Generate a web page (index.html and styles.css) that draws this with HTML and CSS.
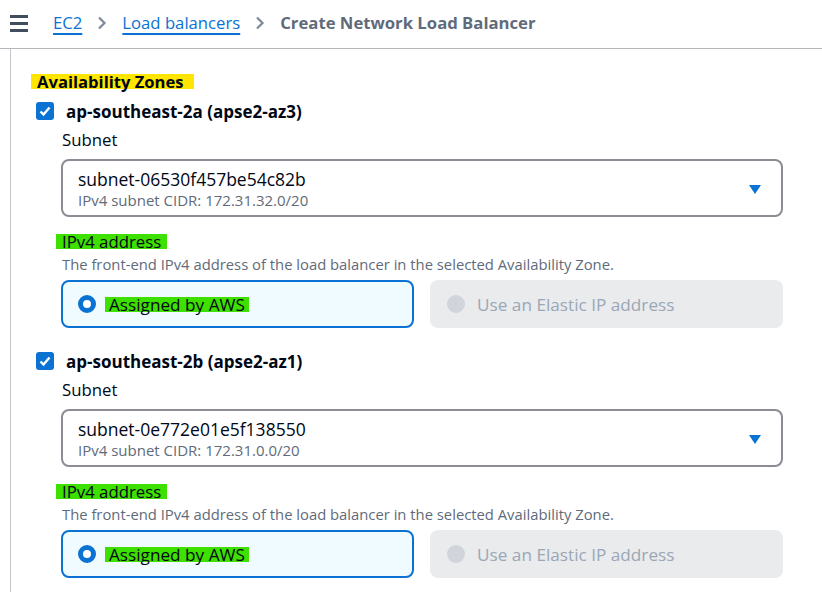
FILE: index.html
```html
<!DOCTYPE html>
<html lang="en">
<head>
    <meta charset="UTF-8">
    <meta name="viewport" content="width=device-width, initial-scale=1.0">
    <title>Create Network Load Balancer</title>
    <link rel="stylesheet" href="styles.css">
</head>
<body>
    <header class="top-bar">
        <span class="menu-btn">
            <svg width="18" height="18" viewBox="0 0 18 18"><rect x="0" y="1" width="18" height="3"/><rect x="0" y="8" width="18" height="3"/><rect x="0" y="15" width="18" height="3"/></svg>
        </span>
        <nav class="breadcrumbs">
            <a href="#">EC2</a>
            <span class="crumb-sep"><svg width="12" height="14" viewBox="0 0 12 14"><path d="M3 1.5l5.5 5.5-5.5 5.5"/></svg></span>
            <a href="#">Load balancers</a>
            <span class="crumb-sep"><svg width="12" height="14" viewBox="0 0 12 14"><path d="M3 1.5l5.5 5.5-5.5 5.5"/></svg></span>
            <span class="crumb-current">Create Network Load Balancer</span>
        </nav>
    </header>

    <main class="content">
        <h2 class="section-title"><span class="hl-yellow">Availability Zones</span></h2>

        <div class="az">
            <label class="az-check">
                <span class="checkbox"><svg width="14" height="14" viewBox="0 0 14 14"><path d="M2.5 7.5l3 3 6-7"/></svg></span>
                <span class="az-name">ap-southeast-2a (apse2-az3)</span>
            </label>
            <div class="az-body">
                <div class="field-label">Subnet</div>
                <div class="select">
                    <div class="select-text">
                        <div class="select-value">subnet-06530f457be54c82b</div>
                        <div class="select-desc">IPv4 subnet CIDR: 172.31.32.0/20</div>
                    </div>
                    <span class="caret"></span>
                </div>
                <div class="field-label field-label-hl"><span class="hl-green">IPv4 address</span></div>
                <div class="field-desc">The front-end IPv4 address of the load balancer in the selected Availability Zone.</div>
                <div class="tiles">
                    <div class="tile tile-selected"><span class="radio radio-on"></span><span class="hl-green hl-tile">Assigned by AWS</span></div>
                    <div class="tile tile-disabled"><span class="radio radio-off"></span><span>Use an Elastic IP address</span></div>
                </div>
            </div>
        </div>

        <div class="az">
            <label class="az-check">
                <span class="checkbox"><svg width="14" height="14" viewBox="0 0 14 14"><path d="M2.5 7.5l3 3 6-7"/></svg></span>
                <span class="az-name">ap-southeast-2b (apse2-az1)</span>
            </label>
            <div class="az-body">
                <div class="field-label">Subnet</div>
                <div class="select">
                    <div class="select-text">
                        <div class="select-value">subnet-0e772e01e5f138550</div>
                        <div class="select-desc">IPv4 subnet CIDR: 172.31.0.0/20</div>
                    </div>
                    <span class="caret"></span>
                </div>
                <div class="field-label field-label-hl"><span class="hl-green">IPv4 address</span></div>
                <div class="field-desc">The front-end IPv4 address of the load balancer in the selected Availability Zone.</div>
                <div class="tiles">
                    <div class="tile tile-selected"><span class="radio radio-on"></span><span class="hl-green hl-tile">Assigned by AWS</span></div>
                    <div class="tile tile-disabled"><span class="radio radio-off"></span><span>Use an Elastic IP address</span></div>
                </div>
            </div>
        </div>
    </main>
</body>
</html>
```

FILE: styles.css
```css
html {
    height: 100%;
}

body {
    font-family: 'Open Sans', 'Liberation Sans', sans-serif;
    margin: 0;
    padding: 0;
    background-color: #fff;
    color: #000716;
    min-height: 100%;
    display: flex;
    flex-direction: column;
}

.top-bar {
    height: 48px;
    flex-shrink: 0;
    border-bottom: 1px solid #b4b4bb;
    display: flex;
    align-items: center;
    padding-left: 10px;
}

.menu-btn {
    display: flex;
    width: 18px;
    height: 18px;
    fill: #414d5c;
    margin-top: -2px;
}

.breadcrumbs {
    display: flex;
    align-items: center;
    margin-left: 25px;
    margin-top: -2px;
    font-size: 16.7px;
    line-height: 24px;
}

.breadcrumbs a {
    color: #0972d3;
    text-decoration: underline;
    text-underline-offset: 4px;
    text-decoration-thickness: 1.5px;
}

.crumb-sep {
    display: flex;
    margin: 0 14px 0 14px;
}

.crumb-sep svg {
    fill: none;
    stroke: #7d8998;
    stroke-width: 2.2;
}

.crumb-current {
    color: #5f6b7a;
    font-weight: 700;
}

.content {
    flex: 1;
    margin-left: 10px;
    border-left: 1px solid #c6c6cd;
    padding: 23px 0 12px 20px;
}

.section-title {
    margin: 0;
    font-size: 16.6px;
    font-weight: 700;
    line-height: 20px;
}

.hl-yellow {
    display: inline-block;
    background-color: #ffe500;
    line-height: 15px;
    padding: 0 10px 0 6px;
}

.az {
    margin-top: 9px;
}

.az + .az {
    margin-top: 23px;
}

.az-check {
    display: flex;
    align-items: center;
    height: 20px;
    margin-left: 5px;
}

.checkbox {
    width: 18px;
    height: 18px;
    border-radius: 3px;
    background-color: #0972d3;
    display: flex;
    align-items: center;
    justify-content: center;
}

.checkbox svg {
    fill: none;
    stroke: #fff;
    stroke-width: 2.4;
}

.az-name {
    margin-left: 12px;
    font-size: 17px;
    font-weight: 700;
}

.az-body {
    padding-left: 30px;
    width: 722px;
}

.field-label {
    font-size: 16.8px;
    line-height: 22px;
    margin-top: 8px;
    padding-left: 1px;
}

.field-label-hl {
    margin-top: 16px;
    line-height: 18px;
}

.hl-green {
    display: inline-block;
    background-color: #3ee000;
    line-height: 15px;
    padding: 0 6px 0 6px;
    margin-left: -6px;
}

.select {
    margin-top: 8px;
    height: 58px;
    box-sizing: border-box;
    border: 2px solid #8c8c94;
    border-radius: 8px;
    display: flex;
    align-items: center;
    justify-content: space-between;
    padding: 0 20px 0 15px;
}

.select-value {
    font-size: 17.5px;
    line-height: 23px;
}

.select-desc {
    font-size: 15px;
    line-height: 18px;
    color: #5f6b7a;
}

.caret {
    width: 0;
    height: 0;
    border-left: 6px solid transparent;
    border-right: 6px solid transparent;
    border-top: 9px solid #0972d3;
    margin-top: 2px;
}

.field-desc {
    font-size: 14.8px;
    line-height: 20px;
    color: #5f6b7a;
    margin-top: 3px;
    padding-left: 1px;
}

.tiles {
    display: grid;
    grid-template-columns: 1fr 1fr;
    gap: 16px;
    margin-top: 6px;
}

.tile {
    height: 48px;
    box-sizing: border-box;
    border-radius: 8px;
    display: flex;
    align-items: center;
    padding-left: 15px;
    font-size: 17.2px;
}

.tile-selected {
    background-color: #f0fbff;
    border: 2px solid #0972d3;
}

.tile-disabled {
    background-color: #e9ebed;
    color: #9ba7b6;
    padding-left: 17px;
}

.radio {
    width: 18px;
    height: 18px;
    border-radius: 50%;
    box-sizing: border-box;
    margin-right: 12px;
    flex-shrink: 0;
}

.radio-on {
    border: 5px solid #0972d3;
    background-color: #fff;
}

.radio-off {
    background-color: #d1d5db;
}

.hl-tile {
    margin-left: -3px;
    padding: 0 4px 0 4px;
}
```
